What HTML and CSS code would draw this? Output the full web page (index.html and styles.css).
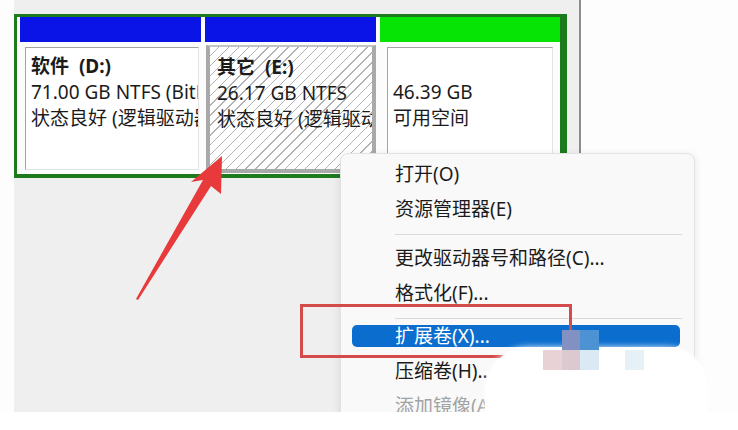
FILE: index.html
```html
<!DOCTYPE html>
<html lang="zh-CN">
<head>
  <meta charset="UTF-8" />
  <meta name="viewport" content="width=device-width, initial-scale=1.0"/>
  <title>磁盘管理 - 扩展卷</title>
  <link rel="stylesheet" href="styles.css">
</head>
<body>
  <div class="screen">

    <!-- Disk management window -->
    <div class="window">
      <div class="disk">

        <div class="vol vol-d">
          <div class="bar bar-blue"></div>
          <div class="body">
            <div class="box">
              <div class="line label">软件 &nbsp;(D:)</div>
              <div class="line">71.00 GB NTFS (BitLocker 已加密)</div>
              <div class="line">状态良好 (逻辑驱动器)</div>
            </div>
          </div>
        </div>

        <div class="vol vol-e">
          <div class="bar bar-blue"></div>
          <div class="body">
            <div class="box hatch">
              <div class="line label">其它 &nbsp;(E:)</div>
              <div class="line">26.17 GB NTFS</div>
              <div class="line">状态良好 (逻辑驱动器)</div>
            </div>
          </div>
        </div>

        <div class="vol vol-free">
          <div class="bar bar-green"></div>
          <div class="body">
            <div class="box">
              <div class="line">&nbsp;</div>
              <div class="line">46.39 GB</div>
              <div class="line">可用空间</div>
            </div>
          </div>
        </div>

      </div>
    </div>

    <!-- Context menu -->
    <div class="menu">
      <div class="item">打开(O)</div>
      <div class="item">资源管理器(E)</div>
      <div class="sep"></div>
      <div class="item">更改驱动器号和路径(C)...</div>
      <div class="item">格式化(F)...</div>
      <div class="sep"></div>
      <div class="item active">扩展卷(X)...</div>
      <div class="item">压缩卷(H)...</div>
      <div class="item disabled">添加镜像(A)...</div>
    </div>

    <!-- Annotations -->
    <div class="mark"></div>
    <svg class="arrow" width="738" height="412" viewBox="0 0 738 412">
      <polygon points="222,156 221,194 211,186 138,300 136,299 203,180 191,182" fill="#e8393b"/>
    </svg>

    <!-- Blurred watermark -->
    <div class="blur">
      <span class="px" style="left:77px;top:5px;background:#8391c2"></span>
      <span class="px" style="left:95px;top:5px;background:#4d93d4"></span>
      <span class="px" style="left:58px;top:25px;background:#e9d2d5"></span>
      <span class="px" style="left:77px;top:25px;background:#dcc9cf"></span>
      <span class="px" style="left:95px;top:25px;background:#dbe9f4"></span>
      <span class="px" style="left:140px;top:25px;background:#e6f0f7"></span>
    </div>

  </div>
</body>
</html>
```

FILE: styles.css
```css
* { box-sizing: border-box; }
body {
  margin: 0;
  background: #fff;
  font-family: "Noto Sans", "Noto Sans CJK SC", sans-serif;
  font-size: 19px;
  color: #1b1b1b;
}
.screen {
  position: relative;
  width: 738px;
  height: 412px;
  overflow: hidden;
  background: #fdfdfd;
}
.window {
  margin-left: 14px;
  width: 567px;
  height: 412px;
  padding-top: 14px;
  background: #efefef;
  border-right: 2px solid #8c8c8c;
}
.disk {
  display: flex;
  gap: 4px;
  width: 553px;
  height: 164px;
  padding-left: 3px;
  background: #fcfcfc;
  border-style: solid;
  border-color: #1d7a1d;
  border-width: 3px 7px 4px 3px;
}
.vol {
  display: flex;
  flex-direction: column;
}
.vol-d { width: 181px; }
.vol-e { width: 171px; }
.vol-free { width: 180px; }
.bar {
  height: 25px;
  flex: none;
}
.bar-blue { background: #0a14e6; }
.bar-green { background: #06e406; }
.body {
  flex: 1;
  display: flex;
  padding: 5px 2px 4px 5px;
}
.vol-e .body { padding: 3px 0 1px 1px; }
.vol-free .body { padding: 5px 7px 4px 7px; }
.box {
  flex: 1;
  min-width: 0;
  overflow: hidden;
  padding: 5px 0 0 5px;
  background: #fff;
  border: 1px solid #a4a4a4;
  border-right-color: #e4e4e4;
  border-bottom-color: #e4e4e4;
}
.box.hatch {
  padding: 7px 0 0 7px;
  border: 4px solid #a9a9a9;
  border-top-width: 2px;
  border-top-color: #c4c4c4;
  background: #fff repeating-linear-gradient(135deg, #fff 0 6px, #b2b2b2 6px 7px);
}
.line {
  line-height: 26px;
  white-space: nowrap;
  overflow: hidden;
}
.label { font-weight: bold; }

.menu {
  position: absolute;
  left: 340px;
  top: 153px;
  width: 355px;
  height: 290px;
  padding-top: 3px;
  background: #f9f9f9;
  border: 1px solid #e2e2e2;
  border-radius: 8px;
  box-shadow: 0 2px 8px rgba(0,0,0,0.10);
}
.item {
  height: 35px;
  line-height: 35px;
  padding-left: 54px;
}
.item.active {
  height: 22px;
  line-height: 22px;
  margin: 6px 14px 7px 11px;
  padding-left: 43px;
  background: #0b6ecf;
  border-radius: 5px;
  color: #fff;
}
.item.disabled { color: #a3a3a3; }
.sep {
  height: 1px;
  margin: 7px 12px 6px 54px;
  background: #d9d9d9;
}

.mark {
  position: absolute;
  left: 300px;
  top: 304px;
  width: 272px;
  height: 54px;
  border: 3px solid #d44b4b;
}
.arrow {
  position: absolute;
  left: 0;
  top: 0;
}
.blur {
  position: absolute;
  left: 485px;
  top: 325px;
  width: 222px;
  height: 110px;
}
.blur::before {
  content: "";
  position: absolute;
  left: 0;
  top: 22px;
  width: 222px;
  height: 88px;
  background: #fff;
  border-radius: 44px 40px 0 0;
  box-shadow: 0 0 6px rgba(255,255,255,0.9);
}
.px {
  position: absolute;
  width: 19px;
  height: 20px;
}
```
